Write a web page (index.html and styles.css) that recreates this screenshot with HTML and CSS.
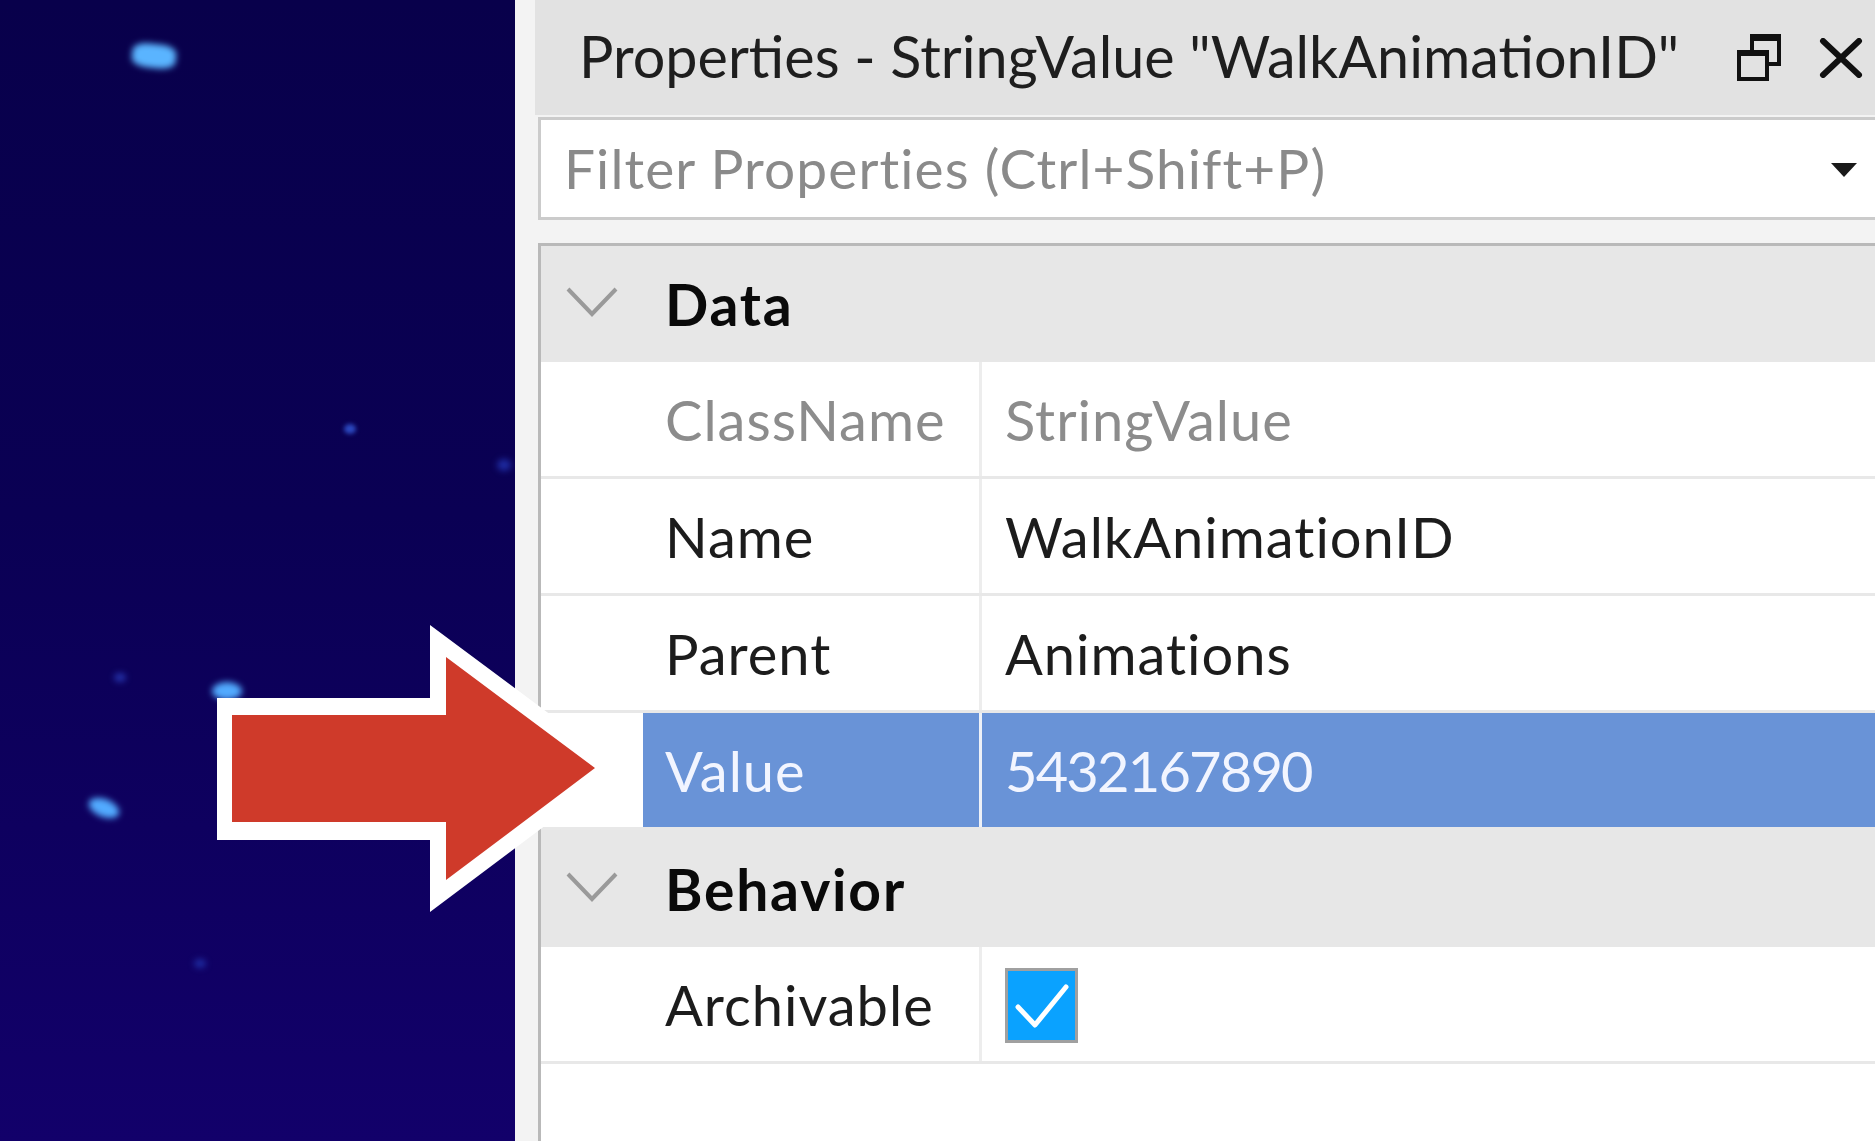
FILE: index.html
```html
<!DOCTYPE html>
<html lang="en">
<head>
<meta charset="utf-8">
<title>Properties - StringValue</title>
<link rel="stylesheet" href="styles.css">
</head>
<body>
<div class="scene">
  <div class="viewport">
    <span class="star s1"></span>
    <span class="star s2"></span>
    <span class="star s3"></span>
    <span class="star s4"></span>
    <span class="star s5"></span>
    <span class="star s6"></span>
    <span class="star s7"></span>
  </div>
  <div class="panel">
    <div class="titlebar">
      <div class="title">Properties - StringValue "WalkAnimationID"</div>
      <div class="win-btns">
        <svg class="ico-restore" width="44" height="48" viewBox="0 0 44 48">
          <rect x="15" y="4" width="27" height="27" fill="none" stroke="#111" stroke-width="4"/>
          <rect x="13" y="1" width="31" height="7" fill="#111"/>
          <rect x="2" y="19" width="28" height="27" fill="#e2e2e2" stroke="#111" stroke-width="4"/>
          <rect x="0" y="17" width="32" height="6" fill="#111"/>
        </svg>
        <svg class="ico-close" width="44" height="40" viewBox="0 0 44 40">
          <path d="M4 3 L40 37 M40 3 L4 37" stroke="#111" stroke-width="6" stroke-linecap="round"/>
        </svg>
      </div>
    </div>
    <div class="filter">
      <span class="placeholder">Filter Properties (Ctrl+Shift+P)</span>
      <svg class="caret" width="26" height="16" viewBox="0 0 26 16"><polygon points="0,1 26,1 13,15" fill="#1a1a1a"/></svg>
    </div>
    <div class="table">
      <div class="cat">
        <svg class="chev" width="52" height="30" viewBox="0 0 52 30"><polyline points="2,2 26,27 50,2" fill="none" stroke="#9a9a9a" stroke-width="4"/></svg>
        <span class="cat-name">Data</span>
      </div>
      <div class="row readonly">
        <div class="indent"></div>
        <div class="name">ClassName</div>
        <div class="val">StringValue</div>
      </div>
      <div class="row">
        <div class="indent"></div>
        <div class="name">Name</div>
        <div class="val">WalkAnimationID</div>
      </div>
      <div class="row">
        <div class="indent"></div>
        <div class="name">Parent</div>
        <div class="val">Animations</div>
      </div>
      <div class="row selected">
        <div class="indent"></div>
        <div class="name">Value</div>
        <div class="val num">5432167890</div>
      </div>
      <div class="cat">
        <svg class="chev" width="52" height="30" viewBox="0 0 52 30"><polyline points="2,2 26,27 50,2" fill="none" stroke="#9a9a9a" stroke-width="4"/></svg>
        <span class="cat-name">Behavior</span>
      </div>
      <div class="row">
        <div class="indent"></div>
        <div class="name">Archivable</div>
        <div class="val">
          <span class="checkbox">
            <svg width="67" height="69" viewBox="0 0 67 69"><polyline points="10,36 27,54 58,16" fill="none" stroke="#fff" stroke-width="5" stroke-linejoin="round" stroke-linecap="round"/></svg>
          </span>
        </div>
      </div>
    </div>
  </div>
</div>
<svg class="arrow" width="1875" height="1141" viewBox="0 0 1875 1141">
  <polygon points="217,698 430,698 430,625 622,768 430,912 430,840 217,840" fill="#ffffff"/>
  <polygon points="232,715 446,715 446,657 595,768 446,880 446,822 232,822" fill="#cf3a2a"/>
</svg>
</body>
</html>
```

FILE: styles.css
```css
* { box-sizing: border-box; }

html, body {
  margin: 0;
  padding: 0;
}

body {
  width: 1875px;
  height: 1141px;
  overflow: hidden;
  position: relative;
  font-family: "Lato", "Liberation Sans", sans-serif;
  background: #f3f3f3;
}

.scene {
  display: flex;
  width: 1875px;
  height: 1141px;
}

.viewport {
  width: 515px;
  flex: none;
  position: relative;
  overflow: hidden;
  background: linear-gradient(180deg, #08004b 0%, #0a0054 45%, #12006a 100%);
}

.star {
  position: absolute;
  border-radius: 50%;
  background: #52aaff;
  filter: blur(3px);
}
.s1 { left: 132px; top: 44px; width: 44px; height: 24px; border-radius: 35%; transform: rotate(6deg); background: #5ab4ff; }
.s2 { left: 344px; top: 424px; width: 12px; height: 10px; background: #2c48c0; filter: blur(2px); }
.s3 { left: 497px; top: 459px; width: 14px; height: 12px; background: #1e2aa0; }
.s4 { left: 88px; top: 799px; width: 32px; height: 18px; transform: rotate(22deg); }
.s5 { left: 212px; top: 682px; width: 30px; height: 18px; }
.s6 { left: 114px; top: 673px; width: 12px; height: 9px; background: #2430a8; }
.s7 { left: 194px; top: 959px; width: 12px; height: 9px; background: #1e2aa0; }

.panel {
  flex: 1;
  display: flex;
  flex-direction: column;
  padding-left: 23px;
  background: #f3f3f3;
  min-width: 0;
}

.titlebar {
  height: 115px;
  margin-left: -3px;
  background: #e2e2e2;
  display: flex;
  align-items: center;
  justify-content: space-between;
  padding: 0 12px 4px 44px;
}

.title {
  font-size: 57.5px;
  color: #1e1e1e;
  white-space: nowrap;
}

.win-btns {
  display: flex;
  align-items: center;
  gap: 38px;
}

.ico-restore { margin-top: 2px; }
.ico-close { margin-top: 4px; }

.filter {
  margin-top: 2px;
  height: 103px;
  background: #ffffff;
  border: 3px solid #cbcbcb;
  border-right: none;
  display: flex;
  align-items: center;
  justify-content: space-between;
  padding: 0 18px 2px 23px;
}

.placeholder {
  font-size: 55px;
  color: #8a8a8a;
  white-space: nowrap;
  letter-spacing: 1.1px;
}

.caret { margin-top: 4px; }

.table {
  margin-top: 23px;
  flex: 1;
  background: #ffffff;
  border-top: 3px solid #b9b9b9;
  border-left: 3px solid #b9b9b9;
  display: flex;
  flex-direction: column;
}

.cat {
  height: 117px;
  flex: none;
  background: #e7e7e7;
  display: flex;
  align-items: center;
  padding-left: 25px;
}

.table > .cat:first-child { height: 116px; }

.chev { margin-right: 47px; margin-top: -4px; }

.cat-name {
  font-size: 57px;
  font-weight: 700;
  letter-spacing: 1.8px;
  color: #0a0a0a;
}

.row {
  height: 117px;
  flex: none;
  display: grid;
  grid-template-columns: 102px 339px 1fr;
  border-bottom: 3px solid #e8e8e8;
  font-size: 56px;
  letter-spacing: 1px;
  color: #1c1c1c;
}

.row > div {
  display: flex;
  align-items: center;
  white-space: nowrap;
}

.row .name {
  padding-left: 22px;
  border-right: 3px solid #ededed;
}

.row .val {
  padding-left: 23px;
}

.row .num { letter-spacing: -1.8px; }

.row.readonly { color: #8c8c8c; }

.row.selected .name,
.row.selected .val {
  background: #6993d7;
  color: #f2f5ff;
}

.row.selected .name { border-right-color: #eef1f7; }

.checkbox {
  width: 73px;
  height: 75px;
  margin-top: 2px;
  background: #0aa2ff;
  border: 3px solid #a0a0a0;
  display: flex;
  align-items: center;
  justify-content: center;
}

.arrow {
  position: absolute;
  left: 0;
  top: 0;
  pointer-events: none;
}
```
